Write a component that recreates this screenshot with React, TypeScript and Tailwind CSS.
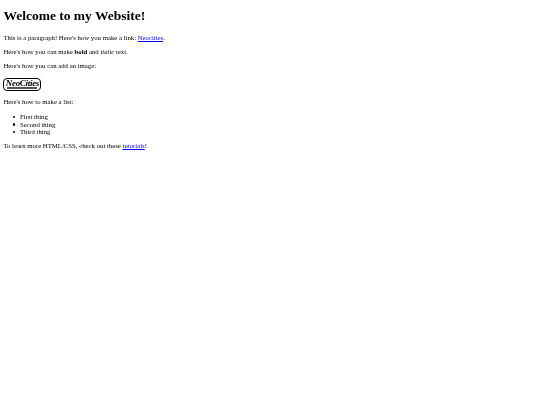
export default function App() {
  return (
    <div className="min-h-[405px] bg-white pl-[3.4px] pt-[8px] font-['Liberation_Serif',serif] text-[6.75px] leading-[7.75px] text-black blur-[0.25px]">
      <h1 className="mb-[10px] text-[13.5px] font-bold leading-[15.5px]">Welcome to my Website!</h1>
      <p className="mb-[6.25px]">
        This is a paragraph! Here's how you make a link:{" "}
        <a href="#" className="text-[#0000ee] underline">Neocities</a>.
      </p>
      <p className="mb-[6.25px]">
        Here's how you can make <strong>bold</strong> and <em>italic</em> text.
      </p>
      <p className="mb-[8.25px]">Here's how you can add an image:</p>
      <div className="mb-[7.25px] flex h-[13px] w-[38px] flex-col items-center overflow-hidden rounded-[4px] border border-black">
        <span className="text-[9px] font-bold italic leading-[8.5px] tracking-[-0.3px]">NeoCities</span>
        {/* tagline in the logo is too small to read, so it is drawn as a band */}
        <span className="mt-[0.25px] h-[1.5px] w-[30px] bg-[#555555]" />
      </div>
      <p className="mb-[7.75px]">Here's how to make a list:</p>
      <ul className="mb-[6.5px] flex flex-col pl-[9.5px] leading-[7.5px]">
        <li className="flex items-center gap-[4.5px]"><span className="h-[2.5px] w-[2.5px] shrink-0 rounded-full bg-black" />First thing</li>
        <li className="flex items-center gap-[4.5px]"><span className="h-[2.5px] w-[2.5px] shrink-0 rounded-full bg-black" />Second thing</li>
        <li className="flex items-center gap-[4.5px]"><span className="h-[2.5px] w-[2.5px] shrink-0 rounded-full bg-black" />Third thing</li>
      </ul>
      <p>
        To learn more HTML/CSS, check out these{" "}
        <a href="#" className="text-[#0000ee] underline">tutorials</a>!
      </p>
    </div>
  );
}
